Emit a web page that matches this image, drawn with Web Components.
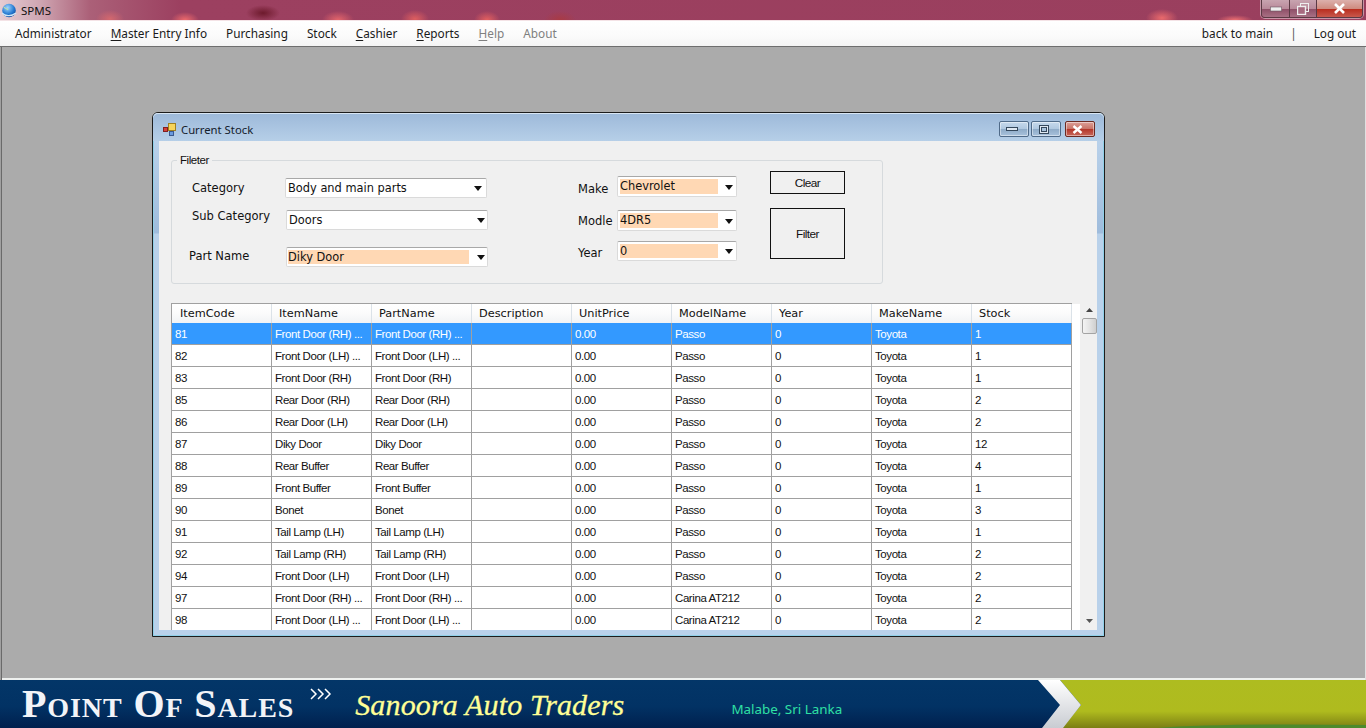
<!DOCTYPE html>
<html><head><meta charset="utf-8"><style>
html,body{margin:0;padding:0;width:1366px;height:728px;overflow:hidden;font-family:"Noto Sans",sans-serif}
body{display:flex;flex-direction:column}
</style></head><body>
<spms-titlebar>SPMS</spms-titlebar>
<spms-menubar></spms-menubar>
<spms-desktop>
  <spms-window caption="Current Stock">
    <spms-filter></spms-filter>
    <spms-grid></spms-grid>
  </spms-window>
</spms-desktop>
<spms-banner></spms-banner>
<script>
function def(name, html){
  customElements.define(name, class extends HTMLElement{
    connectedCallback(){
      if(this.shadowRoot) return;
      const r=this.attachShadow({mode:'open'});
      r.innerHTML=typeof html==='function'?html(this):html;
    }
  });
}
def('spms-titlebar',`<style>
:host{display:flex;align-items:center;height:20px;flex:none;position:relative;color:#111;font:11.5px "Noto Sans",sans-serif;
 border-bottom:1px solid #f4e3e6;
 background:
  radial-gradient(ellipse 14px 9px at 110px 19px,#d4686e,transparent),
  radial-gradient(ellipse 14px 8px at 185px 20px,#ee6a6c,transparent),
  radial-gradient(ellipse 17px 8px at 263px 13px,#6d1a2c,transparent),
  radial-gradient(ellipse 16px 9px at 338px 20px,#e4656b,transparent),
  radial-gradient(ellipse 14px 9px at 415px 19px,#de5e5f,transparent),
  radial-gradient(ellipse 13px 9px at 487px 20px,#e4605f,transparent),
  radial-gradient(ellipse 16px 9px at 560px 20px,#a93a44,transparent),
  radial-gradient(ellipse 16px 9px at 1162px 18px,#ea6a6c,transparent),
  radial-gradient(ellipse 18px 5px at 1235px 20px,#ee7072,transparent),
  linear-gradient(90deg,#e6ccd2 0,#cfa6b2 40px,#ab6078 90px,#9c4060 180px,#9a3f5e 100%)}
svg.ic{margin:0 4px 0 1px;flex:none}
.btns{position:absolute;right:3px;top:0;display:flex;height:17px;border:1px solid #5a3a44;border-top:0;border-radius:0 0 4px 4px;overflow:hidden;box-shadow:0 0 0 1px rgba(255,255,255,.45)}
.b{height:17px;display:flex;align-items:center;justify-content:center;background:linear-gradient(#c8a4b0,#b98a9a 50%,#8f5068 55%,#a87084);border-right:1px solid #5a3a44}
.b.c{background:linear-gradient(#dcb0ac,#cf8c80 50%,#b92e20 55%,#c8584c);border-right:0}
</style>
<svg class="ic" width="16" height="18" viewBox="0 0 16 18"><defs><radialGradient id="g" cx=".4" cy=".3" r=".8"><stop offset="0" stop-color="#9fd6ff"/><stop offset=".6" stop-color="#2478d0"/><stop offset="1" stop-color="#0c3f8c"/></radialGradient></defs><circle cx="8" cy="9.5" r="6.8" fill="url(#g)"/><path d="M1 12c3 3 9 4 14 0" stroke="#cfe6f8" stroke-width="1.4" fill="none"/><path d="M3 6c1 2 3 1 4 3" stroke="#bfe0a8" stroke-width="1.2" fill="none"/></svg>
<span><slot></slot></span>
<div class="btns">
<div class="b" style="width:27px"><svg width="12" height="6"><rect x=".3" y="1" width="11.4" height="4" fill="#eee" stroke="#6a5560" stroke-width=".6"/></svg></div>
<div class="b" style="width:26px"><svg width="12" height="12" fill="none"><rect x="3.5" y=".5" width="8" height="8" stroke="#eee"/><rect x=".5" y="3.5" width="8" height="8" fill="#a76a80" stroke="#eee" stroke-width="1.4"/></svg></div>
<div class="b c" style="width:45px"><svg width="13" height="11"><path d="M2 1l9 9M11 1l-9 9" stroke="#fff" stroke-width="2.6"/></svg></div>
</div>`);
def('spms-menubar',`<style>
:host{display:flex;align-items:center;height:23px;padding-bottom:2px;flex:none;background:linear-gradient(#fff,#fbfbfb 60%,#f4f4f4);color:#1a1a1a;font:11.8px "Noto Sans",sans-serif;border-bottom:1px solid #6e6e6e;padding-left:15px;padding-right:10px}
span{margin-right:19px;white-space:nowrap}
.d{color:#808080}
.sp{flex:1;margin:0}
.sep{margin:0 17px 0 17px;color:#555}
.last{margin-right:0}
u{text-underline-offset:2px}
</style><span>Administrator</span><span><u>M</u>aster Entry Info</span><span>Purchasing</span><span>Stock</span><span><u>C</u>ashier</span><span><u>R</u>eports</span><span class="d"><u>H</u>elp</span><span class="d">About</span><span class="sp"></span><span style="margin:0">back to main</span><span class="sep">|</span><span class="last">Log out</span>`);
def('spms-desktop',`<style>
:host{display:block;flex:1;position:relative;background:#ababab;border-left:1px solid #a0a0a0;box-shadow:inset 1px 0 0 #6a6a6a,inset -1px 0 0 #e0e0e0,inset 0 -2px 0 #eef0ee;min-height:0}
</style><slot></slot>`);
def('spms-window',h=>`<style>
:host{position:absolute;left:151px;top:65px;width:953px;height:525px;box-sizing:border-box;display:flex;flex-direction:column;border:1px solid #1c1c1c;border-radius:6px 6px 0 0;background:linear-gradient(#9db9d9 0,#b9d1ea 28px,#9fbcdc 120px,#b9d1ea 121px);box-shadow:inset 0 0 0 1px #8fd0e8}
.tb{height:28px;box-sizing:border-box;padding-top:4px;flex:none;display:flex;align-items:center;padding-left:10px;font:11.3px "Noto Sans",sans-serif;color:#14202c;background:linear-gradient(#9db9d9,#b6cfe8);border-radius:5px 5px 0 0;box-shadow:inset 0 1px 0 #d8e6f4}
.tb svg{margin-right:5px}
.ctl{margin-left:auto;margin-right:9px;display:flex;align-items:center}
.w{width:30px;height:16px;box-sizing:border-box;border:1px solid #4f6a88;border-radius:2px;display:flex;align-items:center;justify-content:center;background:linear-gradient(#c6d9ec,#b0c8e0 48%,#8fabc8 52%,#a8c2dc);box-shadow:inset 0 0 0 1px rgba(255,255,255,.45);margin-left:2px}
.w.x{margin-left:4px;border-color:#6c2a22;background:linear-gradient(#dca098,#c97468 48%,#b4372a 52%,#c8685c)}
.client{flex:1;min-height:0;margin:0 7px 6px 6px;background:#f0f0f0;padding:19px 0 0 12px;box-sizing:border-box;overflow:hidden;display:flex;flex-direction:column}
</style>
<div class="tb"><svg width="13" height="13" viewBox="0 0 13 13"><rect x="5.5" y=".5" width="7" height="7" fill="#f6d45a" stroke="#a08020"/><rect x=".5" y="4.5" width="4" height="4" fill="#d8403a" stroke="#802020"/><rect x="6.5" y="8.5" width="4" height="4" fill="#6a9ade" stroke="#3a5a90"/></svg><span>${h.getAttribute('caption')}</span>
<div class="ctl">
<div class="w"><svg width="12" height="4"><rect x=".5" y=".5" width="11" height="3" fill="#dfe8f2" stroke="#35485c"/></svg></div>
<div class="w"><svg width="10" height="9" fill="none"><rect x=".5" y=".5" width="9" height="8" fill="#dfe8f2" stroke="#35485c"/><rect x="2.5" y="2.5" width="5" height="4" fill="#a8c2dc" stroke="#35485c"/></svg></div>
<div class="w x"><svg width="11" height="9"><path d="M1.5 1l8 7M9.5 1l-8 7" stroke="#fff" stroke-width="2.4"/></svg></div>
</div></div>
<div class="client"><slot></slot></div>`);
def('spms-combo',h=>{
 const w=+h.getAttribute('w')||202, pw=+h.getAttribute('pw')||0, ht=+h.getAttribute('ht')||20, pl=h.hasAttribute('pl')?+h.getAttribute('pl'):2, ar=h.hasAttribute('ar')?+h.getAttribute('ar'):4;
 return `<style>
:host{display:block;flex:none;width:${w}px;height:${ht}px;box-sizing:border-box;background:#fff;border:1px solid #dadada;border-top-color:#a8a8a8;border-radius:2px;position:relative;color:#111;font:11.4px "DejaVu Sans",sans-serif;}
.v{position:absolute;left:${pl}px;top:2px;bottom:2px;${pw?`width:${pw}px;background:#ffd8b4;`:'right:18px;'}line-height:${ht-6}px;box-sizing:border-box;white-space:nowrap}
svg{position:absolute;right:${ar}px;top:50%;margin-top:-2px}
</style><div class="v"><slot></slot></div><svg width="8" height="5"><path d="M0 0h8L4 5z" fill="#111"/></svg>`});
def('spms-filter',`<style>
:host{display:flex;flex:none;box-sizing:border-box;width:712px;height:124px;border:1px solid #d6dadd;border-radius:3px;position:relative;font:11.5px "DejaVu Sans",sans-serif;color:#111}
.lg{position:absolute;left:5px;top:-7px;background:#f0f0f0;padding:0 3px;font:11.5px "Liberation Sans",sans-serif;line-height:13px;letter-spacing:-.45px}
.c1{margin-left:20px;margin-top:17px;width:296px;flex:none;display:flex;flex-direction:column}
.r{display:flex;align-items:center}
.c2{margin-left:90px;margin-top:15px;width:159px;flex:none;display:flex;flex-direction:column}
.c2 .r spms-combo{margin-left:auto}
.c2 .r{width:159px}
.c3{margin-left:33px;margin-top:10px;display:flex;flex-direction:column;width:75px}
.bt{box-sizing:border-box;width:75px;border:1px solid #111;display:flex;align-items:center;justify-content:center;font:11.8px "Liberation Sans",sans-serif;letter-spacing:-.55px;color:#111}
</style>
<div class="lg">Fileter</div>
<div class="c1">
 <div class="r"><span style="width:93px">Category</span><spms-combo>Body and main parts</spms-combo></div>
 <div class="r" style="margin-top:12px"><span style="width:94px;margin-top:-8px">Sub Category</span><spms-combo ar="2">Doors</spms-combo></div>
 <div class="r" style="margin-top:17px"><span style="width:97px;margin-left:-3px;margin-top:-2px">Part Name</span><spms-combo pw="181" pl="1" ar="2">Diky Door</spms-combo></div>
</div>
<div class="c2">
 <div class="r"><span style="margin-top:4px">Make</span><spms-combo w="120" pw="98" ht="21" ar="3">Chevrolet</spms-combo></div>
 <div class="r" style="margin-top:13px"><span>Modle</span><spms-combo w="120" pw="98" ht="21" ar="3">4DR5</spms-combo></div>
 <div class="r" style="margin-top:10px"><span style="margin-top:4px">Year</span><spms-combo w="120" pw="98" ar="3">0</spms-combo></div>
</div>
<div class="c3"><div class="bt" style="height:23px">Clear</div><div class="bt" style="height:51px;margin-top:14px">Filter</div></div>`);
const rows=[
[81,'Front Door (RH) ...','Passo',1],[82,'Front Door (LH) ...','Passo',1],[83,'Front Door (RH)','Passo',1],
[85,'Rear Door (RH)','Passo',2],[86,'Rear Door (LH)','Passo',2],[87,'Diky Door','Passo',12],
[88,'Rear Buffer','Passo',4],[89,'Front Buffer','Passo',1],[90,'Bonet','Passo',3],
[91,'Tail Lamp (LH)','Passo',1],[92,'Tail Lamp (RH)','Passo',2],[94,'Front Door (LH)','Passo',2],
[97,'Front Door (RH) ...','Carina AT212',2],[98,'Front Door (LH) ...','Carina AT212',2]];
const heads=['ItemCode','ItemName','PartName','Description','UnitPrice','ModelName','Year','MakeName','Stock'];
def('spms-grid',`<style>
:host{display:flex;flex:1;min-height:0;margin-top:19px;overflow:hidden}
.t{width:901px;flex:none;box-sizing:border-box;border-left:1px solid #a0a0a0;border-top:1px solid #a0a0a0;background:#fff;overflow:hidden}
.pad{width:8px;flex:none;background:#fff;border-top:1px solid #f0f0f0;box-sizing:border-box}
.h,.r{display:grid;grid-template-columns:repeat(9,100px)}
.h{height:19px;background:linear-gradient(#fff,#fbfbfb 50%,#f1f3f5);font:11.3px "DejaVu Sans",sans-serif;color:#111;line-height:20px}
.h div{padding-left:7px;border-right:1px solid #dbe2e8;box-sizing:border-box;white-space:nowrap}
.h div:first-child{padding-left:8px}
.r{height:22px;font:11.5px "Liberation Sans",sans-serif;letter-spacing:-.42px;color:#111;line-height:22px}
.r div{padding-left:3px;border-right:1px solid #a0a0a0;border-bottom:1px solid #a0a0a0;box-sizing:border-box;white-space:nowrap;overflow:hidden}
.s{background:#3399ff;color:#fff}
.sb{width:16px;flex:none;background:#f0f0f0;display:flex;flex-direction:column;align-items:center;margin-left:1px}
.up{margin-top:5px}
.th{box-sizing:border-box;width:15px;height:16px;margin-top:6px;border:1px solid #a4a4a4;border-radius:2px;background:linear-gradient(90deg,#f4f4f4,#e4e4e4 50%,#cfcfcf)}
.dn{margin-top:auto;margin-bottom:7px}
</style>
<div class="t"><div class="h">${heads.map(x=>`<div>${x}</div>`).join('')}</div>
${rows.map((r,i)=>`<div class="r${i==0?' s':''}">`+[r[0],r[1],r[1],'','0.00',r[2],'0','Toyota',r[3]].map(v=>`<div>${v===''?'&nbsp;':v}</div>`).join('')+`</div>`).join('')}
</div><div class="pad"></div>
<div class="sb"><svg class="up" width="7" height="4"><path d="M3.5 0L7 4H0z" fill="#444"/></svg><div class="th"></div><svg class="dn" width="7" height="4"><path d="M0 0h7L3.5 4z" fill="#555"/></svg></div>`);
def('spms-banner',`<style>
:host{display:block;flex:none;height:48px;position:relative;overflow:hidden;background:linear-gradient(#033668,#023264 55%,#00204e)}
.art{position:absolute;inset:0}
.row{position:relative;display:flex;height:48px;align-items:flex-start}
.p{margin-left:22px;margin-top:2px;font:bold 40px/44px "Liberation Serif",serif;font-variant:small-caps;color:#f2f4f8;white-space:nowrap;letter-spacing:.9px}
.ch{margin-left:16px;margin-top:8px;flex:none}
.s{margin-left:23px;margin-top:5px;font:italic 30px/40px "Liberation Serif",serif;letter-spacing:.15px;-webkit-text-stroke:.3px #ffff96;color:#ffff96;white-space:nowrap}
.m{margin-left:107px;margin-top:20px;font:13.4px/18px "Noto Sans",sans-serif;color:#2fe0a4;white-space:nowrap}
</style>
<svg class="art" width="1366" height="48" viewBox="0 0 1366 48"><defs><linearGradient id="gr" x1="0" y1="0" x2="0" y2="1"><stop offset="0" stop-color="#aebc20"/><stop offset=".65" stop-color="#afbb1e"/><stop offset="1" stop-color="#7b7e14"/></linearGradient><linearGradient id="wh" x1="0" y1="0" x2="0" y2="1"><stop offset="0" stop-color="#fff"/><stop offset="1" stop-color="#c9ccd2"/></linearGradient></defs>
<path d="M1060 0H1366V48H1062L1081 25z" fill="url(#gr)"/><path d="M1038 0H1060L1081 25L1063 48H1042L1060 25z" fill="url(#wh)"/><path d="M1157 48q60-5 209-3v3z" fill="#4d8a2c"/></svg>
<div class="row"><span class="p">Point Of Sales</span>
<svg class="ch" width="22" height="12" viewBox="0 0 22 12" fill="none" stroke="#fff" stroke-width="1.5"><path d="M1 1l5 5-5 5M8 1l5 5-5 5M15 1l5 5-5 5"/></svg>
<span class="s">Sanoora Auto Traders</span><span class="m">Malabe, Sri Lanka</span></div>`);
</script>
</body></html>
